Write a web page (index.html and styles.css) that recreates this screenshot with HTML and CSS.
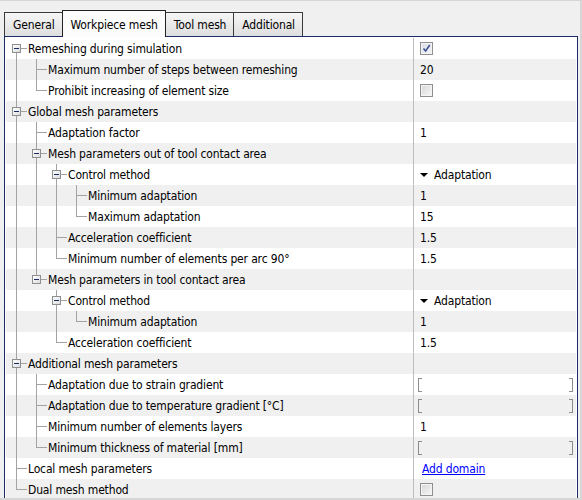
FILE: index.html
```html
<!DOCTYPE html>
<html>
<head>
<meta charset="utf-8">
<link rel="stylesheet" href="styles.css">
</head>
<body>
<div class="window">
  <div class="tabs">
    <div class="tab">General</div>
    <div class="tab selected">Workpiece mesh</div>
    <div class="tab">Tool mesh</div>
    <div class="tab">Additional</div>
  </div>
  <div class="panel">
    <div class="row"><span class="name"><span class="c f"><span class="box"></span></span><span class="label">Remeshing during simulation</span></span><span class="val"><span class="check on"><svg viewBox="0 0 9 9" width="9" height="9"><path d="M1.5 4.5 L3.6 7 L7.8 1" fill="none" stroke="#3c5394" stroke-width="1.6"/></svg></span></span></div>
    <div class="row"><span class="name"><span class="c v"></span><span class="c t"></span><span class="label">Maximum number of steps between remeshing</span></span><span class="val">20</span></div>
    <div class="row"><span class="name"><span class="c v"></span><span class="c l"></span><span class="label">Prohibit increasing of element size</span></span><span class="val"><span class="check"></span></span></div>
    <div class="row"><span class="name"><span class="c t"><span class="box"></span></span><span class="label">Global mesh parameters</span></span><span class="val"></span></div>
    <div class="row"><span class="name"><span class="c v"></span><span class="c t"></span><span class="label">Adaptation factor</span></span><span class="val">1</span></div>
    <div class="row"><span class="name"><span class="c v"></span><span class="c t"><span class="box"></span></span><span class="label">Mesh parameters out of tool contact area</span></span><span class="val"></span></div>
    <div class="row"><span class="name"><span class="c v"></span><span class="c v"></span><span class="c t"><span class="box"></span></span><span class="label">Control method</span></span><span class="val"><span class="arrow"></span>Adaptation</span></div>
    <div class="row"><span class="name"><span class="c v"></span><span class="c v"></span><span class="c v"></span><span class="c t"></span><span class="label">Minimum adaptation</span></span><span class="val">1</span></div>
    <div class="row"><span class="name"><span class="c v"></span><span class="c v"></span><span class="c v"></span><span class="c l"></span><span class="label">Maximum adaptation</span></span><span class="val">15</span></div>
    <div class="row"><span class="name"><span class="c v"></span><span class="c v"></span><span class="c t"></span><span class="label">Acceleration coefficient</span></span><span class="val">1.5</span></div>
    <div class="row"><span class="name"><span class="c v"></span><span class="c v"></span><span class="c l"></span><span class="label">Minimum number of elements per arc 90°</span></span><span class="val">1.5</span></div>
    <div class="row"><span class="name"><span class="c v"></span><span class="c l"><span class="box"></span></span><span class="label">Mesh parameters in tool contact area</span></span><span class="val"></span></div>
    <div class="row"><span class="name"><span class="c v"></span><span class="c"></span><span class="c t"><span class="box"></span></span><span class="label">Control method</span></span><span class="val"><span class="arrow"></span>Adaptation</span></div>
    <div class="row"><span class="name"><span class="c v"></span><span class="c"></span><span class="c v"></span><span class="c l"></span><span class="label">Minimum adaptation</span></span><span class="val">1</span></div>
    <div class="row"><span class="name"><span class="c v"></span><span class="c"></span><span class="c l"></span><span class="label">Acceleration coefficient</span></span><span class="val">1.5</span></div>
    <div class="row"><span class="name"><span class="c t"><span class="box"></span></span><span class="label">Additional mesh parameters</span></span><span class="val"></span></div>
    <div class="row"><span class="name"><span class="c v"></span><span class="c t"></span><span class="label">Adaptation due to strain gradient</span></span><span class="val"><span class="field"><span class="bl"></span><span class="br"></span></span></span></div>
    <div class="row"><span class="name"><span class="c v"></span><span class="c t"></span><span class="label">Adaptation due to temperature gradient [°C]</span></span><span class="val"><span class="field"><span class="bl"></span><span class="br"></span></span></span></div>
    <div class="row"><span class="name"><span class="c v"></span><span class="c t"></span><span class="label">Minimum number of elements layers</span></span><span class="val">1</span></div>
    <div class="row"><span class="name"><span class="c v"></span><span class="c l"></span><span class="label">Minimum thickness of material [mm]</span></span><span class="val"><span class="field"><span class="bl"></span><span class="br"></span></span></span></div>
    <div class="row"><span class="name"><span class="c t"></span><span class="label">Local mesh parameters</span></span><span class="val"><a class="link" href="#">Add domain</a></span></div>
    <div class="row"><span class="name"><span class="c l"></span><span class="label">Dual mesh method</span></span><span class="val"><span class="check"></span></span></div>
  </div>
</div>
</body>
</html>
```
FILE: styles.css
```css
html, body {
  margin: 0;
  padding: 0;
}
body {
  width: 582px;
  height: 500px;
  overflow: hidden;
  background: #f0f0f0;
  font-family: "DejaVu Sans Condensed", "DejaVu Sans", sans-serif;
  font-size: 12px;
  letter-spacing: -0.15px;
  color: #000;
}
.window {
  box-sizing: border-box;
  width: 582px;
  height: 500px;
  border-top: 1px solid #d6d6d6;
  border-right: 2px solid #d6d6d6;
  border-bottom: 2px solid #d6d6d6;
  padding: 9px 0 0 4px;
  overflow: hidden;
}
.tabs {
  display: flex;
  align-items: flex-end;
  height: 26px;
}
.tab {
  box-sizing: border-box;
  height: 24px;
  padding: 4px 7px 0 8px;
  border: 1px solid #3a3a3a;
  border-bottom: none;
  background: linear-gradient(#f6f6f6, #dedede);
  line-height: 16px;
  margin-left: -1px;
  position: relative;
}
.tab:first-child {
  margin-left: 0;
}
.tab.selected {
  height: 27px;
  margin-bottom: -1px;
  padding-top: 6px;
  background: #fcfcfc;
  border-color: #222;
  z-index: 2;
}
.panel {
  width: 574px;
  box-sizing: border-box;
  border: 1px solid #1c2b6b;
  padding: 1px 1px 0 1px;
  background: #fff;
  height: 480px;
}
.row {
  display: flex;
  height: 21px;
  line-height: 21px;
  background: #fff;
}
.row:nth-child(even) {
  background: #f0f0f0;
}
.name {
  display: flex;
  width: 407px;
  border-right: 1px solid #bdbdbd;
  white-space: nowrap;
  overflow: hidden;
}
.label {
  margin-left: 2px;
  padding-top: 1px;
}
.c {
  position: relative;
  flex: none;
  width: 20px;
  height: 21px;
}
.c.v::before,
.c.t::before {
  content: "";
  position: absolute;
  left: 10px;
  top: 0;
  width: 1px;
  height: 21px;
  background: #a3a3a3;
}
.c.l::before {
  content: "";
  position: absolute;
  left: 10px;
  top: 0;
  width: 1px;
  height: 11px;
  background: #a3a3a3;
}
.c.f::before {
  content: "";
  position: absolute;
  left: 10px;
  top: 10px;
  width: 1px;
  height: 11px;
  background: #a3a3a3;
}
.c.t::after,
.c.l::after,
.c.f::after {
  content: "";
  position: absolute;
  left: 10px;
  top: 10px;
  width: 11px;
  height: 1px;
  background: #a3a3a3;
}
.box {
  position: absolute;
  left: 6px;
  top: 6px;
  width: 7px;
  height: 7px;
  border: 1px solid #8e8f8f;
  background: linear-gradient(135deg, #ffffff, #dcdcdc);
  z-index: 1;
}
.box::after {
  content: "";
  position: absolute;
  left: 1px;
  top: 3px;
  width: 5px;
  height: 1px;
  background: #1a2a66;
}
.val {
  flex: 1;
  padding-left: 6px;
  padding-top: 1px;
  display: flex;
  align-items: flex-start;
  white-space: nowrap;
}
.check {
  box-sizing: border-box;
  width: 13px;
  height: 13px;
  margin-top: 3px;
  border: 1px solid #8f8f8f;
  background: linear-gradient(135deg, #d8d8d8, #f6f6f6);
  box-shadow: inset 0 0 0 1px #f4f4f4;
  display: flex;
  align-items: center;
  justify-content: center;
}
.check.on {
  background: linear-gradient(135deg, #dcdde6, #f4f4f8);
}
.arrow {
  width: 0;
  height: 0;
  margin-top: 8px;
  margin-right: 6px;
  border-top: 4px solid #000;
  border-left: 4px solid transparent;
  border-right: 4px solid transparent;
}
.field {
  display: flex;
  justify-content: space-between;
  width: 155px;
  margin-left: -2px;
  margin-top: 3px;
}
.bl, .br {
  box-sizing: border-box;
  width: 4px;
  height: 14px;
  border: 1px solid #8c8c8c;
}
.bl {
  border-right: none;
}
.br {
  border-left: none;
}
.link {
  color: #0000ff;
  text-decoration: underline;
  margin-left: 2px;
}
```
